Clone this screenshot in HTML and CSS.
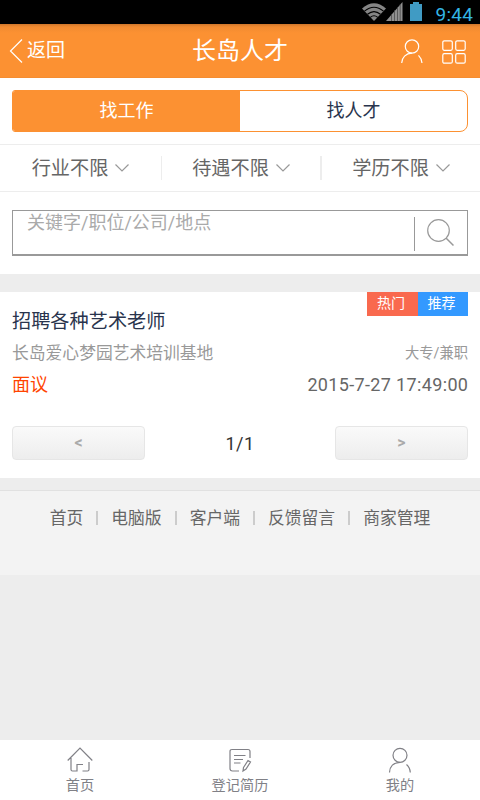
FILE: index.html
```html
<!DOCTYPE html>
<html lang="zh-CN">
<head>
<meta charset="utf-8">
<title>长岛人才</title>
<link rel="stylesheet" href="styles.css">
</head>
<body>
<div class="status">
  <svg width="24" height="18" viewBox="0 0 24 18"><path d="M0 5.5Q12-5 24 5.5L12 18Z" fill="#858585"/><path d="M2.5 8.2Q12 .2 21.5 8.2M5.5 11.3Q12 6 18.5 11.3M8.3 14.3Q12 11.2 15.7 14.3" fill="none" stroke="#000" stroke-width="1.1"/></svg>
  <svg class="signal" width="17" height="19" viewBox="0 0 17 19"><path d="M0 19L16.5 0V19Z" fill="#909090"/><path d="M5.5 12v7M8.5 8v11M11.5 5v14M14.2 2v17" stroke="#444" stroke-width=".7"/></svg>
  <svg class="battery" width="12" height="19" viewBox="0 0 12 19"><path d="M3 0h6v2h3v17H0V2h3z" fill="#409bc4"/></svg>
  <span class="clock">9:44</span>
</div>
<header class="header">
  <a class="back"><svg width="14" height="26" viewBox="0 0 14 26"><path d="M13 1.5L1.5 13 13 24.5" fill="none" stroke="#fff" stroke-width="1.2"/></svg>返回</a>
  <h1 class="title">长岛人才</h1>
  <div class="tools">
    <svg width="22" height="25" viewBox="0 0 22 25" fill="none" stroke="#fff" stroke-width="1.2"><circle cx="11" cy="7.5" r="6.7"/><path d="M.7 24c.2-5.500 4-9.600 10.300-9.800M17.500 16.300c2 2 3.300 4.500 3.500 7.700"/></svg>
    <svg width="24" height="24" viewBox="0 0 24 24" fill="none" stroke="#fff" stroke-width="1.2"><rect x=".8" y=".8" width="9.500" height="9.500" rx="1.500"/><rect x="13.700" y=".8" width="9.500" height="9.500" rx="1.500"/><rect x=".8" y="13.700" width="9.500" height="9.500" rx="1.500"/><rect x="13.700" y="13.700" width="9.500" height="9.500" rx="1.500"/></svg>
  </div>
</header>
<section class="finder">
  <div class="tabs"><a class="tab active">找工作</a><a class="tab">找人才</a></div>
  <div class="filters">
    <a class="filter">行业不限<svg width="14" height="8" viewBox="0 0 14 8"><path d="M.5.5L7 7 13.500.5"/></svg></a>
    <a class="filter">待遇不限<svg width="14" height="8" viewBox="0 0 14 8"><path d="M.5.5L7 7 13.500.5"/></svg></a>
    <a class="filter">学历不限<svg width="14" height="8" viewBox="0 0 14 8"><path d="M.5.5L7 7 13.500.5"/></svg></a>
  </div>
  <div class="search">
    <span class="hint">关键字/职位/公司/地点</span>
    <span class="go"><svg width="28" height="28" viewBox="0 0 28 28" fill="none" stroke="#999" stroke-width="1.200"><circle cx="11.500" cy="11.500" r="10.800"/><path d="M19 19l7.500 7.500" stroke-width="1.500"/></svg></span>
  </div>
</section>
<main class="results">
  <article class="job">
    <div class="badges"><span class="badge hot">热门</span><span class="badge pick">推荐</span></div>
    <h2 class="name">招聘各种艺术老师</h2>
    <div class="line company"><span>长岛爱心梦园艺术培训基地</span><span class="kind">大专/兼职</span></div>
    <div class="line pay"><span>面议</span><time>2015-7-27 17:49:00</time></div>
  </article>
  <div class="pager"><a class="page">&lt;</a><span class="count">1/1</span><a class="page">&gt;</a></div>
</main>
<footer class="footer"><a>首页</a><i></i><a>电脑版</a><i></i><a>客户端</a><i></i><a>反馈留言</a><i></i><a>商家管理</a></footer>
<nav class="nav">
  <a><svg width="26" height="26" viewBox="0 0 26 26"><path d="M.7 13.500L13 1l12.300 12.500M4 11v11.500q0 1.500 1.500 1.500H10v-6.500h6M22 15v7.500q0 1.500-1.500 1.500H15.500"/></svg>首页</a>
  <a><svg width="26" height="26" viewBox="0 0 26 26"><path d="M12 24H5.500Q3 24 3 21.500V4.500Q3 2.500 5 2.500H21Q23 2.500 23 4.500V11M7 8.500H18.500M7 12.500H16M7 16H13.500M16.500 20.500L21 13.500 23.500 15 19 22 16 24Z"/></svg>登记简历</a>
  <a><svg width="26" height="26" viewBox="0 0 26 26"><circle cx="13" cy="8.300" r="7"/><path d="M2.500 25.500C2.700 19.500 6.500 15.500 13 15.300M19.500 17.500Q23 20.500 23.300 25.500"/></svg>我的</a>
</nav>
</body>
</html>
```
FILE: styles.css
```css
* { box-sizing: border-box; }
body {
  margin: 0;
  width: 480px;
  height: 800px;
  display: flex;
  flex-direction: column;
  overflow: hidden;
  background: #ededed;
  font-family: Roboto, "Noto Sans CJK SC", sans-serif;
  font-size: 18px;
  color: #666;
}
svg { display: block; flex: none; }
.status {
  height: 24px;
  background: #000;
  display: flex;
  justify-content: flex-end;
  align-items: flex-start;
  padding: 3px 7px 0 0;
}
.signal { margin-top: -1px; }
.battery { margin: -1px 13px 0 7px; }
.clock { color: #33b5e5; font-size: 19px; line-height: 24px; letter-spacing: .3px; margin-right: -.3px; }
.header {
  height: 54px;
  background: linear-gradient(#cf762b 0, #f28b31 3px, #fc9132 9px);
  color: #fff;
  display: grid;
  grid-template-columns: 120px 1fr 120px;
  align-items: center;
  border-bottom: 1px solid #f58d31;
}
.back { display: flex; align-items: center; gap: 4px; padding: 1px 0 0 9px; font-size: 19px; line-height: 28px; }
.title { margin: 0; text-align: center; font-size: 24px; font-weight: 400; line-height: 30px; }
.tools { display: flex; justify-content: flex-end; align-items: center; gap: 19px; padding: 2px 14px 0 0; }
.finder { height: 196px; background: #fff; padding-top: 12px; }
.tabs {
  height: 42px;
  margin: 0 12px 12px;
  border: 1px solid #fc9132;
  border-radius: 3px 8px 8px 3px;
  display: flex;
  overflow: hidden;
}
.tab { flex: 1; text-align: center; line-height: 39px; color: #29344d; }
.active { background: #fc9132; color: #fff; }
.filters {
  height: 48px;
  border: solid #ededed;
  border-width: 1px 0;
  display: grid;
  grid-template-columns: 162px 160px 158px;
  align-items: center;
}
.filter {
  height: 24px;
  line-height: 23px;
  font-size: 19.2px;
  display: flex;
  align-items: center;
  justify-content: center;
  gap: 7px;
  border-right: 2px solid #ededed;
}
.filter:first-child { border-width: 0 1px 0 0; }
.filter:last-child { border: 0; }
.filter svg { margin-top: -1px; }
.filter path { fill: none; stroke: #999; stroke-width: 1.2; }
.search {
  height: 46px;
  margin: 18px 12px 0;
  border: 1px solid #999;
  border-bottom-width: 2px;
  display: flex;
  justify-content: space-between;
  padding-left: 14px;
}
.hint { color: #aaa; line-height: 24px; }
.go { width: 53px; height: 34px; margin-top: 6px; border-left: 1px solid #999; padding: 2px 0 0 12px; }
.results { height: 186px; margin-top: 18px; background: #fff; padding: 0 12px; }
.job { position: relative; padding-top: 15px; }
.badges { position: absolute; top: 0; right: 0; display: flex; }
.badge { width: 50px; height: 24px; line-height: 23px; text-align: center; font-size: 14px; color: #fff; padding-right: 3px; }
.hot { width: 51px; background: #f9694e; }
.pick { background: #3399ff; }
.name { margin: 0; font-size: 19.2px; font-weight: 400; color: #29344d; line-height: 30px; }
.line { display: flex; justify-content: space-between; line-height: 32px; }
.company { font-size: 16.8px; color: #999; }
.kind { font-size: 14.3px; }
.pay { color: #ff4400; }
.pay time { color: #666; letter-spacing: .35px; margin-right: -.35px; }
.pager { display: flex; justify-content: space-between; align-items: center; margin-top: 25px; }
.page {
  width: 133px;
  height: 34px;
  border: 1px solid #e6e6e6;
  border-radius: 4px;
  background: linear-gradient(#fafafa, #ededed);
  text-align: center;
  color: #aaa;
  font-size: 16px;
  font-weight: 700;
  line-height: 32px;
}
.count { color: #333; letter-spacing: .4px; }
.footer {
  height: 85px;
  margin-top: 12px;
  border-top: 1px solid #e1e1e1;
  background: #f3f3f3;
  display: flex;
  justify-content: center;
  align-items: flex-start;
  padding-top: 14px;
  font-size: 16.8px;
  line-height: 26px;
}
.footer i { width: 2px; height: 14px; margin: 6px 13px 0; background: #ccc; }
.nav {
  height: 60px;
  margin-top: auto;
  background: #fff;
  display: grid;
  grid-template-columns: repeat(3, 1fr);
}
.nav a { display: flex; flex-direction: column; align-items: center; padding-top: 7px; font-size: 14.2px; line-height: 24px; color: #808086; }
.nav path, .nav circle { fill: none; stroke: #808086; stroke-width: 1.2; }
```
